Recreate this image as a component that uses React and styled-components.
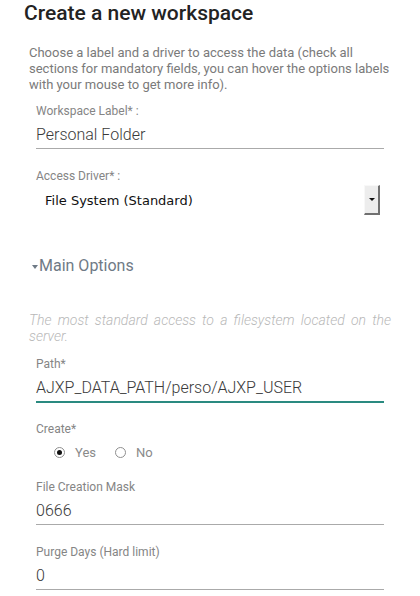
import styled, { createGlobalStyle } from "styled-components";

const GlobalStyle = createGlobalStyle`
  html, body {
    margin: 0;
    padding: 0;
    background: #ffffff;
  }
  body {
    font-family: Roboto, "Liberation Sans", sans-serif;
  }
`;

const Page = styled.div`
  width: 420px;
  height: 596px;
  overflow: hidden;
  padding: 1px 24px 0;
  box-sizing: border-box;
`;

const Title = styled.h2`
  margin: 0;
  font-size: 21px;
  line-height: 24px;
  font-weight: 500;
  color: #232323;
`;

const Form = styled.div`
  padding: 0 5px;
  width: 362px;
`;

const Intro = styled.p`
  margin: 20px 0 0;
  font-size: 13px;
  line-height: 16px;
  color: #7a7a7a;
`;

const Field = styled.div`
  margin: ${(p) => p.$top ?? 20}px 7px 0;
`;

const Label = styled.div`
  font-size: 12px;
  line-height: 14px;
  color: #858585;
`;

const Value = styled.div`
  margin-top: 7px;
  font-family: "Roboto Light", Roboto, sans-serif;
  font-size: 16px;
  line-height: 20px;
  font-weight: 300;
  color: #3a3a3a;
  padding-bottom: 3px;
  border-bottom: ${(p) => (p.$focused ? "2px solid #2a8a80" : "1px solid #aaaaaa")};
`;

const SelectBox = styled.div`
  margin-top: 2px;
  height: 29px;
  display: flex;
  align-items: center;
  justify-content: space-between;
  padding-left: 9px;
`;

const SelectText = styled.span`
  margin-top: 2px;
  font-family: "DejaVu Sans", sans-serif;
  font-size: 13px;
  color: #111;
`;

const DropButton = styled.span`
  width: 13px;
  height: 27px;
  margin-right: 4px;
  display: flex;
  align-items: center;
  justify-content: center;
  background: #ededed;
  border-top: 1px solid #f8f8f8;
  border-left: 1px solid #f8f8f8;
  border-right: 2px solid #707070;
  border-bottom: 2px solid #707070;
  box-sizing: content-box;

  &::after {
    content: "";
    border-left: 3px solid transparent;
    border-right: 3px solid transparent;
    border-top: 3px solid #111;
  }
`;

const SectionHeader = styled.div`
  margin: 42px 0 0 3px;
  display: flex;
  align-items: center;
  font-size: 16px;
  line-height: 20px;
  color: #6f7a86;

  &::before {
    content: "";
    margin-top: 2px;
    margin-right: 1px;
    border-left: 3.5px solid transparent;
    border-right: 3.5px solid transparent;
    border-top: 4px solid #6f7a86;
  }
`;

const SectionNote = styled.p`
  margin: 36px 0 0;
  font-size: 14px;
  line-height: 16px;
  font-style: italic;
  font-weight: 300;
  color: #b8b8b8;
  text-align: justify;
`;

const RadioGroup = styled.div`
  margin: 8px 0 0 18px;
  display: flex;
  align-items: center;
  height: 16px;
`;

const RadioOption = styled.label`
  display: flex;
  align-items: center;
  margin-right: 19px;
  font-size: 13px;
  color: #8a8a8a;
`;

const RadioDot = styled.span`
  width: 9px;
  height: 9px;
  border-radius: 50%;
  border: 1px solid #8f8f8f;
  margin-right: 10px;
  display: flex;
  align-items: center;
  justify-content: center;

  &::after {
    content: "";
    width: 5px;
    height: 5px;
    border-radius: 50%;
    background: ${(p) => (p.$checked ? "#111" : "transparent")};
  }
`;

const TextField = ({ label, value, top, focused }) => (
  <Field $top={top}>
    <Label>{label}</Label>
    <Value $focused={focused}>{value}</Value>
  </Field>
);

const App = () => {
  return (
    <Page>
      <GlobalStyle />
      <Title>Create a new workspace</Title>
      <Form>
        <Intro>
          Choose a label and a driver to access the data (check all sections
          for mandatory fields, you can hover the options labels with your
          mouse to get more info).
        </Intro>
        <TextField label="Workspace Label* :" value="Personal Folder" top={11} />
        <Field>
          <Label>Access Driver* :</Label>
          <SelectBox>
            <SelectText>File System (Standard)</SelectText>
            <DropButton />
          </SelectBox>
        </Field>
        <SectionHeader>Main Options</SectionHeader>
        <SectionNote>
          The most standard access to a filesystem located on the server.
        </SectionNote>
        <TextField
          label="Path*"
          value="AJXP_DATA_PATH/perso/AJXP_USER"
          top={13}
          focused
        />
        <Field $top={19}>
          <Label>Create*</Label>
          <RadioGroup>
            <RadioOption>
              <RadioDot $checked />
              Yes
            </RadioOption>
            <RadioOption>
              <RadioDot />
              No
            </RadioOption>
          </RadioGroup>
        </Field>
        <TextField label="File Creation Mask" value="0666" />
        <TextField label="Purge Days (Hard limit)" value="0" />
      </Form>
    </Page>
  );
};

export default App;
